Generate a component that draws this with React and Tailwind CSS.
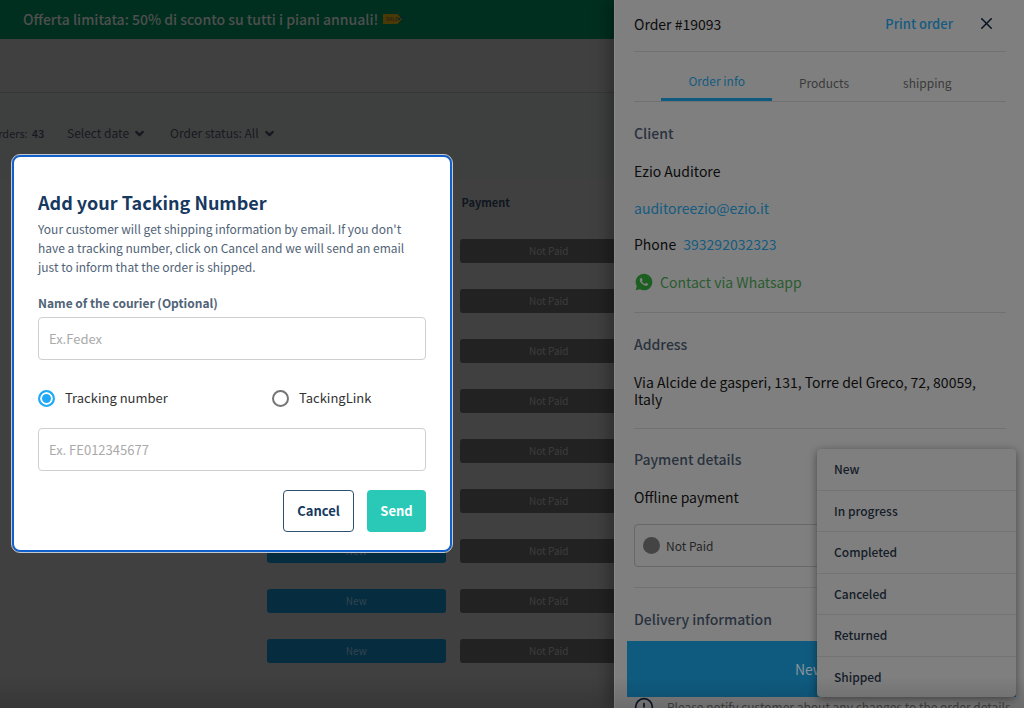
import { useState } from 'react'
import { ChevronDown, CircleAlert, X } from 'lucide-react'
import { RiWhatsappFill } from 'react-icons/ri'

const orders = [1, 2, 3, 4, 5, 6, 7, 8, 9]
const statuses = ['New', 'In progress', 'Completed', 'Canceled', 'Returned', 'Shipped']

function SaleTag() {
  return (
    <svg viewBox="0 0 24 14" className="h-[14px] w-6" aria-hidden="true">
      <path d="M1 2h14.500l4.500 5-4.500 5H1z" fill="#493906" />
      <path d="M17 7q3-3 7-1.500" fill="none" stroke="#0b2036" strokeWidth="1" />
      <circle cx="17" cy="7" r="1" fill="#0b2036" />
      <text x="4" y="9" fontSize="5" fontWeight="700" fill="#2c2415">SALE</text>
    </svg>
  )
}

function OrdersPage() {
  return (
    <main className="flex min-w-0 flex-1 flex-col overflow-hidden bg-[#404040]">
      <div className="flex h-[39px] shrink-0 items-center gap-1 bg-[#002f1f] pb-0.5 pl-[23px] text-[14px] leading-5 font-medium text-[#4f4f4f]">
        <p className="whitespace-nowrap">Offerta limitata: 50% di sconto su tutti i piani annuali!</p>
        <SaleTag />
      </div>
      <div className="h-[54px] shrink-0 border-b border-[#363838]" />
      <div className="flex h-[85px] shrink-0 items-start bg-[#3e403f] pt-[30px] text-[12px] leading-5 whitespace-nowrap text-[#16191f]">
        <p className="-ml-[10px] flex w-[77px] gap-1 text-[11px]">
          Orders: <b className="font-medium">43</b>
        </p>
        <button className="mr-6 flex items-center gap-1">
          Select date <ChevronDown size={13} strokeWidth={4} />
        </button>
        <button className="flex items-center gap-1">
          Order status: All <ChevronDown size={13} strokeWidth={4} />
        </button>
      </div>
      <table className="ml-[267px] w-[371px] shrink-0 table-fixed text-[10px]">
        <thead>
          <tr className="h-12 text-left text-[11px] text-[#10161f]">
            <th className="font-bold">Status</th>
            <th className="pl-[9px] font-bold">Payment</th>
          </tr>
        </thead>
        <tbody>
          {orders.map((id) => (
            <tr key={id} className="h-[50px] text-center">
              <td className="pr-[7px]">
                <span className="block h-6 rounded-[3px] bg-[#062c40] leading-6 text-[#34454e]">New</span>
              </td>
              <td className="pl-[7px]">
                <span className="block h-6 rounded-[3px] bg-[#222222] leading-6 text-[#3d3d3d]">Not Paid</span>
              </td>
            </tr>
          ))}
        </tbody>
      </table>
    </main>
  )
}

function OrderPanel() {
  return (
    <aside className="relative flex w-[410px] shrink-0 flex-col border-l border-[#8a8a8a] bg-[#7f7f7f] pr-[18px] pl-[19px] text-[14px] leading-5 text-[#0c0c0c] shadow-[-4px_0_16px_rgba(0,0,0,0.35)]">
      <header className="flex h-[52px] shrink-0 items-center border-b border-[#717171] pb-1">
        <h2 className="flex-1">Order #19093</h2>
        <a href="#print" className="text-[13px] font-medium text-[#145b80]">Print order</a>
        <button aria-label="Close" className="mr-2.5 ml-6 text-[#0b1624]">
          <X size={19} strokeWidth={2} />
        </button>
      </header>
      <nav className="flex h-[50px] shrink-0 justify-center border-b border-[#717171] text-[12px] text-[#3a3a3a]">
        <button className="mt-3 border-b-[3px] border-[#0f5b80] px-[27px] text-[#145b80]">Order info</button>
        <button className="mt-3 px-[27px]">Products</button>
        <button className="mt-3 px-[27px]">shipping</button>
      </nav>

      <section className="shrink-0 border-b border-[#717171] pt-[21px] pb-5">
        <h3 className="font-medium text-[#29323e]">Client</h3>
        <p className="mt-[18px]">Ezio Auditore</p>
        <a href="mailto:auditoreezio@ezio.it" className="mt-[17px] block text-[#145b80]">auditoreezio@ezio.it</a>
        <p className="mt-4">
          Phone <a href="tel:393292032323" className="ml-1 text-[#145b80]">393292032323</a>
        </p>
        <a href="#whatsapp" className="mt-[18px] flex items-center gap-1.5 text-[#2a5c30]">
          <RiWhatsappFill size={20} className="text-[#1d5f21]" /> Contact via Whatsapp
        </a>
      </section>

      <section className="shrink-0 border-b border-[#717171] pt-[21px] pb-5">
        <h3 className="font-medium text-[#29323e]">Address</h3>
        <p className="mt-5 leading-[17px]">Via Alcide de gasperi, 131, Torre del Greco, 72, 80059, Italy</p>
      </section>

      <section className="shrink-0 border-b border-[#717171] py-5">
        <h3 className="font-medium text-[#29323e]">Payment details</h3>
        <p className="mt-[18px]">Offline payment</p>
        <div className="mt-[17px] flex h-[43px] items-center gap-1.5 rounded border border-[#686868] pl-2">
          <span className="size-[17px] rounded-full bg-[#444444]" />
          <select aria-label="Payment status" className="flex-1 appearance-none text-[12px] text-[#262626]">
            <option>Not Paid</option>
          </select>
        </div>
      </section>

      <section className="shrink-0 pt-[21px]">
        <h3 className="font-medium text-[#29323e]">Delivery information</h3>
        <button className="-mx-[7px] mt-3 block h-14 w-[389px] bg-[#0f5b80] pr-6 text-[#8a9399]">New</button>
        <p className="flex items-center gap-[13px] text-[12px] whitespace-nowrap text-[#424242]">
          <CircleAlert size={20} className="shrink-0 text-[#0b1624]" />
          Please notify customer about any changes to the order details.
        </p>
      </section>

      <ul className="absolute top-[449px] right-2 flex h-[248px] w-[199px] flex-col divide-y divide-[#747474] rounded bg-[#7f7f7f] text-[12px] font-medium text-[#141c28] shadow-[0_2px_8px_rgba(0,0,0,0.45)]">
        {statuses.map((status) => (
          <li key={status} className="flex flex-1">
            <button className="flex-1 pl-[17px] text-left">{status}</button>
          </li>
        ))}
      </ul>
    </aside>
  )
}

const radioClass =
  'size-[17px] appearance-none rounded-full border-2 border-[#757575] checked:border-[#1eaaf8] checked:bg-[#1eaaf8] checked:shadow-[inset_0_0_0_2px_white]'
const inputClass =
  'block h-[43px] w-full rounded border border-[#cfcfcf] px-2.5 text-[13px] text-[#333333] placeholder:text-[#aaaaaa]'

function TrackingModal() {
  const [mode, setMode] = useState('number')

  return (
    <form
      role="dialog"
      aria-labelledby="tracking-title"
      className="absolute top-[155px] left-3 w-[440px] rounded-lg border-2 border-[#1160cc] bg-white px-6 pt-[33px] pb-[18px] outline outline-[#c4c9d0]"
    >
      <h1 id="tracking-title" className="text-[18px] leading-6 font-bold text-[#17395f]">Add your Tacking Number</h1>
      <p className="mt-[5px] text-[12px] leading-[19px] text-[#516377]">
        Your customer will get shipping information by email. If you don't have a tracking number, click on Cancel and we
        will send an email just to inform that the order is shipped.
      </p>
      <label htmlFor="courier" className="mt-[17px] mb-1 block text-[12px] leading-5 font-bold text-[#516377]">
        Name of the courier (Optional)
      </label>
      <input id="courier" placeholder="Ex.Fedex" className={inputClass} />
      <div className="mt-7 mb-5 grid grid-cols-2 gap-20 text-[13px] leading-5 text-[#333333]">
        <label className="flex items-center gap-2.5 whitespace-nowrap">
          <input type="radio" name="mode" className={radioClass} checked={mode === 'number'} onChange={() => setMode('number')} />
          Tracking number
        </label>
        <label className="flex items-center gap-2.5 whitespace-nowrap">
          <input type="radio" name="mode" className={radioClass} checked={mode === 'link'} onChange={() => setMode('link')} />
          TackingLink
        </label>
      </div>
      <input aria-label="Tracking number" placeholder="Ex. FE012345677" className={inputClass} />
      <div className="mt-[19px] flex justify-end gap-[13px] text-[13px] font-bold">
        <button type="button" className="h-[42px] w-[71px] rounded border border-[#2f506f] text-[#17395f]">Cancel</button>
        <button type="button" className="h-[42px] w-[59px] rounded bg-[#2ac9b7] text-white">Send</button>
      </div>
    </form>
  )
}

export default function App() {
  return (
    <div className="relative flex h-screen overflow-hidden font-['Noto_Sans_CJK_SC',sans-serif]">
      <OrdersPage />
      <OrderPanel />
      <div className="pointer-events-none absolute inset-x-0 bottom-0 h-8 bg-linear-to-b from-transparent to-black/15" />
      <TrackingModal />
    </div>
  )
}
